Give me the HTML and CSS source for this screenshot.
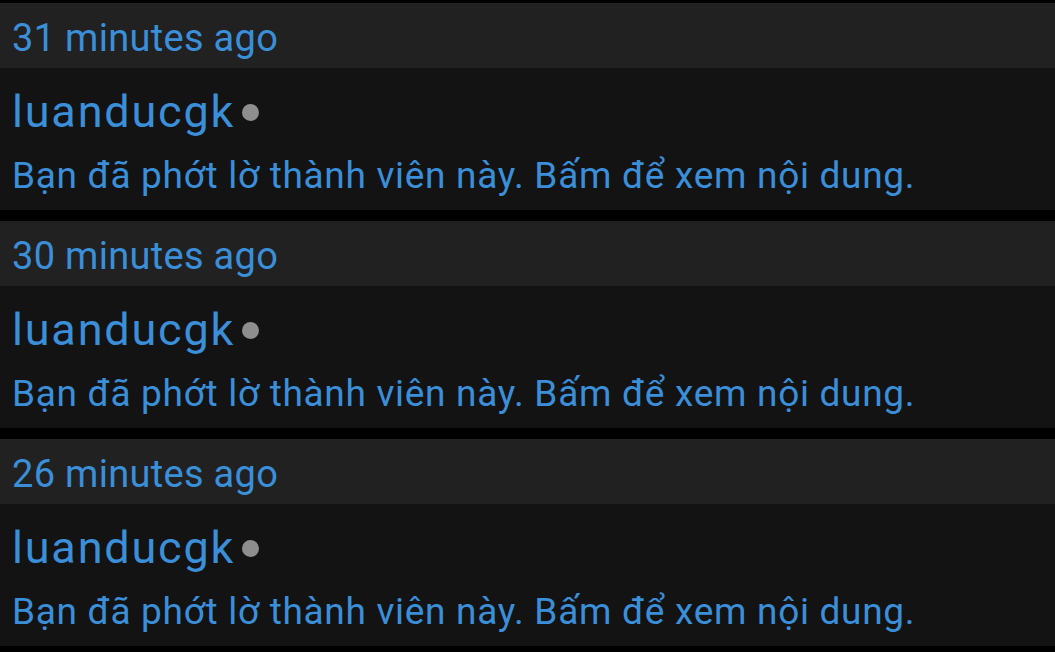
FILE: index.html
```html
<!DOCTYPE html>
<html lang="vi">
<head>
<meta charset="utf-8">
<link rel="stylesheet" href="styles.css">
</head>
<body>
<div class="list">
  <section class="item">
    <div class="time">31 minutes ago</div>
    <div class="content">
      <div class="name">luanducgk<span class="dot"></span></div>
      <div class="msg">Bạn đã phớt lờ thành viên này. Bấm để xem nội dung.</div>
    </div>
  </section>
  <section class="item">
    <div class="time">30 minutes ago</div>
    <div class="content">
      <div class="name">luanducgk<span class="dot"></span></div>
      <div class="msg">Bạn đã phớt lờ thành viên này. Bấm để xem nội dung.</div>
    </div>
  </section>
  <section class="item">
    <div class="time">26 minutes ago</div>
    <div class="content">
      <div class="name">luanducgk<span class="dot"></span></div>
      <div class="msg">Bạn đã phớt lờ thành viên này. Bấm để xem nội dung.</div>
    </div>
  </section>
</div>
</body>
</html>
```
FILE: styles.css
```css
html, body {
  margin: 0;
  padding: 0;
  background: #000;
  height: 100%;
  overflow: hidden;
}
body {
  font-family: Roboto, "Noto Sans", sans-serif;
  color: #3b8fd9;
}
.list {
  display: flex;
  flex-direction: column;
  gap: 11px;
  padding-top: 3px;
}
.item {
  display: flex;
  flex-direction: column;
}
.time {
  height: 65px;
  box-sizing: border-box;
  background: #212121;
  padding: 12px 0 7px 12px;
  font-size: 38px;
  line-height: 46px;
  letter-spacing: 0.3px;
}
.content {
  height: 142px;
  box-sizing: border-box;
  background: #131313;
  padding: 20px 0 0 12px;
}
.name {
  display: flex;
  align-items: center;
  font-size: 45px;
  line-height: 48px;
  letter-spacing: 1.8px;
}
.dot {
  width: 17px;
  height: 17px;
  border-radius: 50%;
  background: #8e8e8e;
  margin-left: 7px;
  margin-top: 1px;
}
.msg {
  font-size: 37px;
  line-height: 44px;
  letter-spacing: 0.7px;
  margin-top: 18px;
}
```
